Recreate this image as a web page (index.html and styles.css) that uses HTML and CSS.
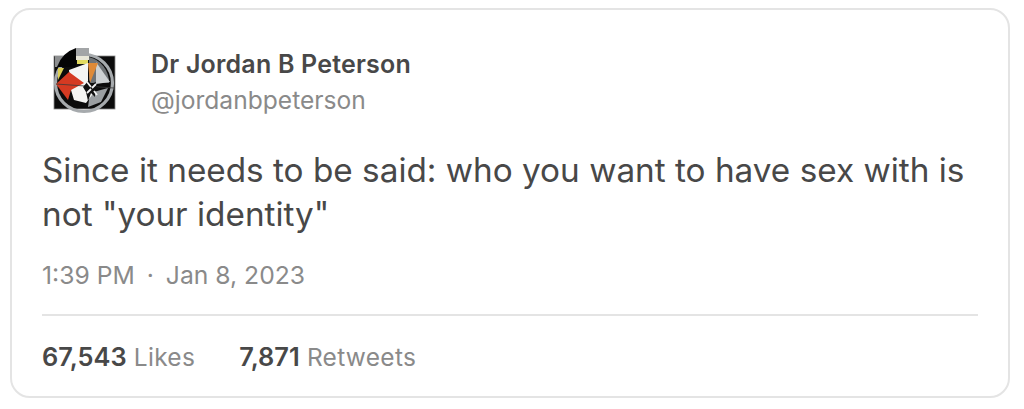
FILE: index.html
```html
<!DOCTYPE html>
<html lang="en">
<head>
    <meta charset="UTF-8">
    <meta name="viewport" content="width=device-width, initial-scale=1.0">
    <title>Tweet</title>
    <link rel="stylesheet" href="styles.css">
</head>
<body>
    <div class="tweet">
        <div class="author">
            <svg class="avatar" width="64" height="70" viewBox="0 0 64 70">
                <rect x="1" y="9" width="61" height="53" fill="#0c0c0c" stroke="#8a8a8a" stroke-width="0.8"/>
                <circle cx="31" cy="36" r="28.5" fill="none" stroke="#a6aaad" stroke-width="3.2"/>
                <path d="M36 10 A26 26 0 0 1 56 36 H36 Z" fill="#6f7376"/>
                <path d="M43 15 L57 35 L43 37 Z" fill="#cdd1d3"/>
                <path d="M37 46 L55 41 L48 55 L35 60 Z" fill="#9a9ea1"/>
                <path d="M2 9 H23 V20 H2 Z" fill="#8d8f90"/>
                <path d="M4 20 A30 30 0 0 1 23 1 V20 Z" fill="#050505"/>
                <path d="M23 1 H36 V9 H23 Z" fill="#a3a5a7"/>
                <path d="M23 9 H36 V13 H23 Z" fill="#e9e7d8"/>
                <path d="M24 13 H35 V17 H24 Z" fill="#e2da5f"/>
                <path d="M5 21 H11 L5 33 Z" fill="#dccf55"/>
                <path d="M16 23 L35 16 V38 L42 44 L33 56 L21 53 L18 43 Z" fill="#f5f5f3"/>
                <path d="M35 16 H45 L37 36 Z" fill="#df8a37"/>
                <path d="M3 37 L16 25 L31 36 L18 43 L15 53 Z" fill="#d53a22"/>
                <path d="M3 37 L61 41" stroke="#3a3a3a" stroke-width="0.8"/>
                <path d="M30 40 L36 33 L38 37 L43 35 L42 39 L47 42 L42 44 L42 50 L38 46 L35 54 L33 45 Z" fill="#101010"/>
                <path d="M34 35 L38 40 M43 37 L39 41 M34 46 L38 42 M41 44 L44 48" stroke="#f2f2f2" stroke-width="1.8"/>
            </svg>
            <div class="names">
                <div class="name">Dr Jordan B Peterson</div>
                <div class="handle">@jordanbpeterson</div>
            </div>
        </div>
        <p class="text">Since it needs to be said: who you want to have sex with is not "your identity"</p>
        <div class="time">1:39 PM<span class="dot">·</span>Jan 8, 2023</div>
        <div class="stats">
            <span><b>67,543</b> Likes</span>
            <span><b>7,871</b> Retweets</span>
        </div>
    </div>
</body>
</html>
```

FILE: styles.css
```css
body {
    margin: 0;
    padding: 8px 14px 10px 10px;
    background: #fff;
    font-family: Inter, "Liberation Sans", sans-serif;
    color: #484848;
}

.tweet {
    height: 390px;
    box-sizing: border-box;
    padding: 34px 30px 0;
    border: 2px solid #e4e4e4;
    border-radius: 20px;
}

.author {
    display: flex;
    align-items: center;
    gap: 34px;
    padding-left: 11px;
}

.avatar {
    flex-shrink: 0;
}

.names {
    margin-top: 2px;
}

.name {
    font-size: 25px;
    font-weight: 600;
    line-height: 36px;
    letter-spacing: 0.2px;
}

.handle {
    font-size: 24.6px;
    line-height: 37px;
    color: #8a8a8a;
}

.text {
    margin: 29px 0 0;
    font-size: 33.3px;
    line-height: 44px;
}

.time {
    margin-top: 21px;
    font-size: 24.7px;
    line-height: 36px;
    color: #8a8a8a;
}

.dot {
    margin: 0 12px;
}

.stats {
    display: flex;
    gap: 44px;
    margin-top: 21px;
    padding-top: 23px;
    border-top: 2px solid #e4e4e4;
    font-size: 24.5px;
    line-height: 36px;
    letter-spacing: 0.3px;
    color: #8a8a8a;
}

.stats b {
    font-size: 25.4px;
    font-weight: 600;
    letter-spacing: 0;
    color: #484848;
}
```
